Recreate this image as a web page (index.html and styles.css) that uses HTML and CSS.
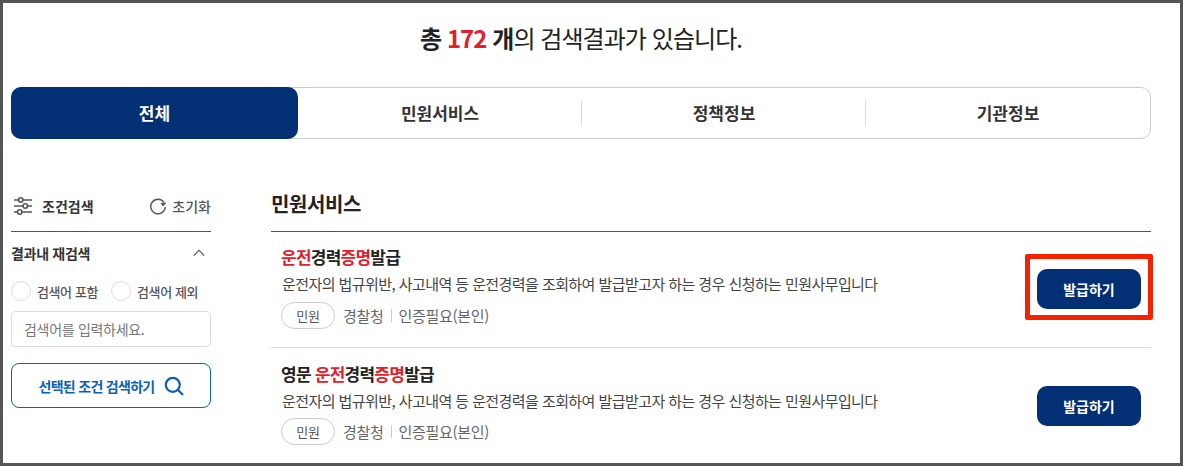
FILE: index.html
```html
<!DOCTYPE html>
<html lang="ko">
<head>
<meta charset="utf-8">
<title>검색결과</title>
<link rel="stylesheet" href="styles.css">
</head>
<body>
<div class="frame">
  <h1 class="summary"><b>총</b> <b class="red">172</b> <b>개</b>의 검색결과가 있습니다.</h1>
  <div class="tabs">
    <div class="tab active">전체</div>
    <div class="tab">민원서비스</div>
    <div class="tab sep">정책정보</div>
    <div class="tab sep">기관정보</div>
  </div>
  <div class="content">
    <aside class="side">
      <div class="side-head">
        <div class="side-title">
          <svg width="20" height="20" viewBox="0 0 20 20" fill="none" stroke="#555" stroke-width="1.6"><path d="M1 4H5.500M10 4H19M1 10H10M14.500 10H19M1 16H4.500M9 16H19"/><circle cx="7.700" cy="4" r="2.200"/><circle cx="12.300" cy="10" r="2.200"/><circle cx="6.700" cy="16" r="2.200"/></svg>
          <span>조건검색</span>
        </div>
        <div class="reset">
          <svg width="18" height="18" viewBox="0 0 18 18" fill="none" stroke="#555" stroke-width="1.400"><path d="M15 5.300A7.300 7.300 0 1 0 16.300 10"/><path d="M17.500 5.500L14 9.500L11.500 6Z" stroke="none" fill="#555"/></svg>
          <span>초기화</span>
        </div>
      </div>
      <div class="acc-head">
        <span>결과내 재검색</span>
        <svg width="12" height="7" viewBox="0 0 12 7" fill="none" stroke="#555" stroke-width="1.100"><path d="M1 6.500L6 1.200L11 6.500"/></svg>
      </div>
      <div class="radios">
        <label class="radio"><i class="dot"></i>검색어 포함</label>
        <label class="radio"><i class="dot"></i>검색어 제외</label>
      </div>
      <div class="field">검색어를 입력하세요.</div>
      <div class="search-btn">
        <span>선택된 조건 검색하기</span>
        <svg width="20" height="20" viewBox="0 0 20 20" fill="none" stroke="#0b62b4" stroke-width="2.200"><circle cx="8.800" cy="8.800" r="7"/><path d="M13.800 13.800L19 19"/></svg>
      </div>
    </aside>
    <main class="main">
      <h2 class="main-title">민원서비스</h2>
      <article class="item">
        <div class="item-body">
          <h3 class="item-title"><em>운전</em>경력<em>증명</em>발급</h3>
          <p class="desc">운전자의 법규위반, 사고내역 등 운전경력을 조회하여 발급받고자 하는 경우 신청하는 민원사무입니다</p>
          <div class="meta"><span class="pill">민원</span><span>경찰청</span><i class="bar"></i><span>인증필요(본인)</span></div>
        </div>
        <div class="action highlighted"><span class="issue">발급하기</span></div>
      </article>
      <article class="item">
        <div class="item-body">
          <h3 class="item-title">영문 <em>운전</em>경력<em>증명</em>발급</h3>
          <p class="desc">운전자의 법규위반, 사고내역 등 운전경력을 조회하여 발급받고자 하는 경우 신청하는 민원사무입니다</p>
          <div class="meta"><span class="pill">민원</span><span>경찰청</span><i class="bar"></i><span>인증필요(본인)</span></div>
        </div>
        <div class="action"><span class="issue">발급하기</span></div>
      </article>
    </main>
  </div>
</div>
</body>
</html>
```
FILE: styles.css
```css
* { box-sizing: border-box; margin: 0; padding: 0; }
html, body { height: 100%; background: #fff; overflow: hidden; }
body { font-family: "Noto Sans CJK KR", "Noto Sans", sans-serif; color: #1a1a1a; }
.frame {
  width: 1183px; height: 466px;
  border: 3px solid #555;
  padding: 0 29px 0 8px;
  overflow: hidden;
  background: #fff;
}
.summary {
  font-size: 24px; font-weight: 400; line-height: 34px;
  text-align: center; padding-top: 18px; height: 84px;
  letter-spacing: -0.95px; color: #222;
}
.summary b { font-weight: 700; }
.red { color: #e3202c; }
.tabs {
  display: flex; height: 52px; width: 1140px;
  border: 1px solid #ccc; border-radius: 10px;
  align-items: stretch;
}
.tab {
  flex: 1; display: flex; align-items: center; justify-content: center;
  padding-bottom: 2px;
  font-size: 17px; font-weight: 700; color: #333; position: relative; letter-spacing: 0;
}
.tab.active {
  flex: 0 0 287px; margin: -1px 0 -1px -1px;
  background: #033075; color: #fff; border-radius: 10px;
}
.tab.sep::before {
  content: ""; position: absolute; left: -1px; top: 12px; bottom: 12px; width: 1px; background: #ddd;
}
.content { display: flex; gap: 60px; margin-top: 41px; }
.side { width: 200px; flex: none; }
.side-head {
  display: flex; justify-content: space-between; align-items: center;
  height: 52px; border-bottom: 1px solid #555; padding: 0 0 0 2px;
}
.side-title { display: flex; align-items: center; gap: 9px; font-size: 14px; font-weight: 700; color: #333; letter-spacing: 0; }
.reset { display: flex; align-items: center; gap: 5px; font-size: 14px; font-weight: 500; color: #555; letter-spacing: 0; }
.acc-head {
  display: flex; justify-content: space-between; align-items: center;
  height: 41px; font-size: 14px; font-weight: 700; color: #333; padding-right: 6px; letter-spacing: -0.3px;
}
.radios { display: flex; gap: 13px; height: 32px; margin-top: 2px; align-items: center; }
.radio { display: flex; align-items: center; gap: 6px; font-size: 13px; font-weight: 500; color: #555; letter-spacing: -0.4px; }
.dot { width: 20px; height: 20px; border: 1px solid #ddd; border-radius: 50%; background: #fff; }
.field {
  height: 36px; margin-top: 4px; border: 1px solid #ddd; border-radius: 4px;
  padding-left: 12px; font-size: 14px; line-height: 34px; color: #777; letter-spacing: -0.3px;
}
.search-btn {
  height: 45px; margin-top: 16px;
  border: 1px solid #0b62b4; border-radius: 8px;
  display: flex; align-items: center; justify-content: center; gap: 9px;
  color: #0b62b4; font-size: 14px; font-weight: 700; letter-spacing: -0.7px;
}
.main { width: 880px; flex: none; }
.main-title {
  font-size: 20px; font-weight: 700; color: #222; height: 52px; line-height: 47px;
  border-bottom: 1px solid #555; letter-spacing: -0.4px;
}
.item {
  display: flex; justify-content: space-between; align-items: center;
  height: 116px; border-bottom: 1px solid #ddd; padding: 0 0 0 11px;
}
.item + .item { border-bottom: 0; }
.item-body { margin-top: -5px; }
.item-title { font-size: 17px; font-weight: 700; color: #222; line-height: 24px; letter-spacing: -0.75px; margin-left: -1px; }
.item-title em { font-style: normal; color: #e3202c; }
.desc { font-size: 15px; line-height: 22px; margin-top: 4px; color: #444; letter-spacing: -0.57px; }
.meta { display: flex; align-items: center; margin-top: 6px; margin-left: -1px; font-size: 15px; color: #666; letter-spacing: -0.3px; height: 28px; }
.pill {
  width: 54px; height: 27px; border: 1px solid #ccc; border-radius: 14px;
  display: flex; align-items: center; justify-content: center; font-size: 13px; margin-right: 8px; color: #555;
}
.bar { width: 1px; height: 13px; background: #ccc; margin: 0 7px; }
.action {
  width: 128px; height: 66px; margin: -5px -2px 0 0; padding-top: 4px;
  display: flex; align-items: center; justify-content: center; flex: none;
  border: 5px solid transparent;
}
.highlighted { border-color: #f52200; border-radius: 2px; }
.issue {
  width: 104px; height: 40px; background: #033075; color: #fff; border-radius: 10px;
  display: flex; align-items: center; justify-content: center;
  font-size: 14px; font-weight: 700; letter-spacing: 0;
}
```
